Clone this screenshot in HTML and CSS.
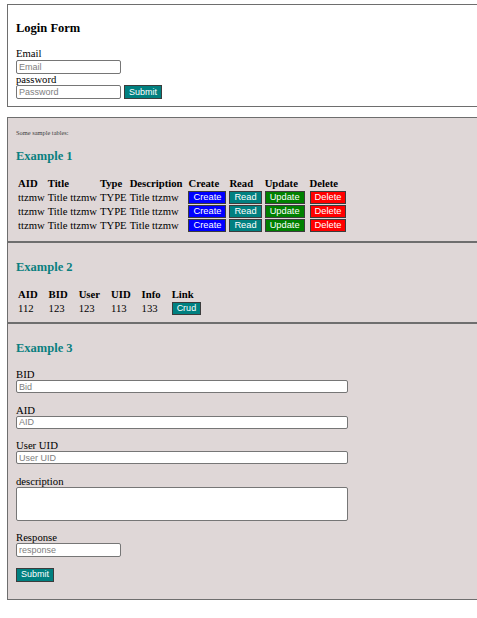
FILE: index.html
```html
<!DOCTYPE html>
<html lang="en">
<head>
<meta charset="utf-8">
<title>Login Form</title>
<link rel="stylesheet" href="styles.css">
</head>
<body>
<section class="card login">
  <h3 class="title">Login Form</h3>
  <form class="stack">
    <label class="lbl" for="email">Email</label>
    <input class="field short" id="email" type="text" placeholder="Email">
    <label class="lbl" for="pw">password</label>
    <div class="inline">
      <input class="field short" id="pw" type="password" placeholder="Password">
      <button class="btn teal" type="button">Submit</button>
    </div>
  </form>
</section>

<section class="card shaded first">
  <p class="note">Some sample tables:</p>
  <h3 class="title accent">Example 1</h3>
  <table class="grid crud">
    <thead>
      <tr><th>AID</th><th>Title</th><th>Type</th><th>Description</th><th>Create</th><th>Read</th><th>Update</th><th>Delete</th></tr>
    </thead>
    <tbody>
      <tr><td>ttzmw</td><td>Title ttzmw</td><td>TYPE</td><td>Title ttzmw</td><td><button class="btn blue" type="button">Create</button></td><td><button class="btn teal" type="button">Read</button></td><td><button class="btn green" type="button">Update</button></td><td><button class="btn red" type="button">Delete</button></td></tr>
      <tr><td>ttzmw</td><td>Title ttzmw</td><td>TYPE</td><td>Title ttzmw</td><td><button class="btn blue" type="button">Create</button></td><td><button class="btn teal" type="button">Read</button></td><td><button class="btn green" type="button">Update</button></td><td><button class="btn red" type="button">Delete</button></td></tr>
      <tr><td>ttzmw</td><td>Title ttzmw</td><td>TYPE</td><td>Title ttzmw</td><td><button class="btn blue" type="button">Create</button></td><td><button class="btn teal" type="button">Read</button></td><td><button class="btn green" type="button">Update</button></td><td><button class="btn red" type="button">Delete</button></td></tr>
    </tbody>
  </table>
</section>

<section class="card shaded middle">
  <h3 class="title accent">Example 2</h3>
  <table class="grid wide">
    <thead>
      <tr><th>AID</th><th>BID</th><th>User</th><th>UID</th><th>Info</th><th>Link</th></tr>
    </thead>
    <tbody>
      <tr><td>112</td><td>123</td><td>123</td><td>113</td><td>133</td><td><button class="btn teal" type="button">Crud</button></td></tr>
    </tbody>
  </table>
</section>

<section class="card shaded last">
  <h3 class="title accent">Example 3</h3>
  <form>
    <div class="group">
      <label class="lbl" for="bid">BID</label>
      <input class="field long" id="bid" type="text" placeholder="Bid">
    </div>
    <div class="group">
      <label class="lbl" for="aid">AID</label>
      <input class="field long" id="aid" type="text" placeholder="AID">
    </div>
    <div class="group">
      <label class="lbl" for="uid">User UID</label>
      <input class="field long" id="uid" type="text" placeholder="User UID">
    </div>
    <div class="group">
      <label class="lbl" for="desc">description</label>
      <textarea class="field area" id="desc"></textarea>
    </div>
    <div class="group">
      <label class="lbl" for="resp">Response</label>
      <input class="field short tall" id="resp" type="text" placeholder="response">
    </div>
    <div class="group">
      <button class="btn teal tall" type="button">Submit</button>
    </div>
  </form>
</section>
</body>
</html>
```

FILE: styles.css
```css
html, body {
  margin: 0;
  padding: 0;
}

body {
  padding-top: 4px;
  font-family: "Liberation Serif", "Times New Roman", serif;
  font-size: 10.7px;
  line-height: 12px;
  color: #000;
  background: #fff;
}

.card {
  margin-left: 7px;
  border: 1px solid #6e6e6e;
  border-right: none;
  padding: 4px 8px 7px;
}

.login {
  padding-bottom: 7px;
  margin-bottom: 10px;
}

.login .lbl {
  line-height: 11.5px;
}

.shaded {
  background: #dfd7d7;
}

.first {
  padding-bottom: 8px;
}

.middle {
  padding-top: 5px;
  padding-bottom: 6px;
}

.last {
  padding-top: 5px;
  padding-bottom: 6px;
}

.title {
  font-size: 12.5px;
  line-height: 15px;
  font-weight: bold;
  margin: 12px 0;
}

.accent {
  color: #0a7f7f;
}

.note {
  font-size: 6.4px;
  line-height: 8px;
  margin: 7px 0 0;
  color: #3c3c3c;
}

.stack {
  display: flex;
  flex-direction: column;
  align-items: flex-start;
  margin: 0;
}

form {
  margin: 0;
}

.lbl {
  display: block;
  line-height: 12px;
}

.inline {
  display: flex;
  align-items: center;
  gap: 3px;
}

.field {
  box-sizing: border-box;
  border: 1px solid #767676;
  border-radius: 2px;
  background: #fff;
  padding: 0 2px;
  margin: 0;
  font-family: "Liberation Sans", Arial, sans-serif;
  font-size: 9px;
  color: #000;
  outline: none;
}

.field::placeholder {
  color: #808080;
}

.short {
  width: 105px;
  height: 14px;
}

.long {
  width: 332px;
  height: 13px;
}

.area {
  display: block;
  width: 332px;
  height: 34px;
  resize: none;
}

.group {
  display: flex;
  flex-direction: column;
  align-items: flex-start;
  margin-bottom: 10.6px;
}

.btn {
  box-sizing: border-box;
  height: 13px;
  padding: 0 4px;
  margin: 0;
  border: 1px solid #3c3c3c;
  border-radius: 0;
  font-family: "Liberation Sans", Arial, sans-serif;
  font-size: 9px;
  line-height: 11px;
  color: #fff;
  display: block;
}

.inline .btn,
.btn.tall {
  height: 14px;
}

.blue { background: #0000ff; }
.teal { background: #008080; }
.green { background: #008000; }
.red { background: #ff0000; }

.grid {
  border-collapse: separate;
  border-spacing: 1px 1.7px;
  margin: 0;
  font-size: 10.7px;
}

.crud {
  margin-top: 2px;
}

.grid th,
.grid td {
  text-align: left;
  vertical-align: middle;
  line-height: 13px;
  white-space: nowrap;
}

.grid th {
  font-weight: bold;
}

.crud th,
.crud td {
  padding: 0 1px;
}

.crud th:nth-child(4),
.crud td:nth-child(4) {
  padding-right: 4px;
}

.crud th:nth-child(7),
.crud td:nth-child(7) {
  padding-right: 3px;
}

.crud .btn {
  font-size: 9.3px;
}

.wide {
  border-spacing: 1px;
}

.wide th,
.wide td {
  padding: 0 9px 0 1px;
}
```
